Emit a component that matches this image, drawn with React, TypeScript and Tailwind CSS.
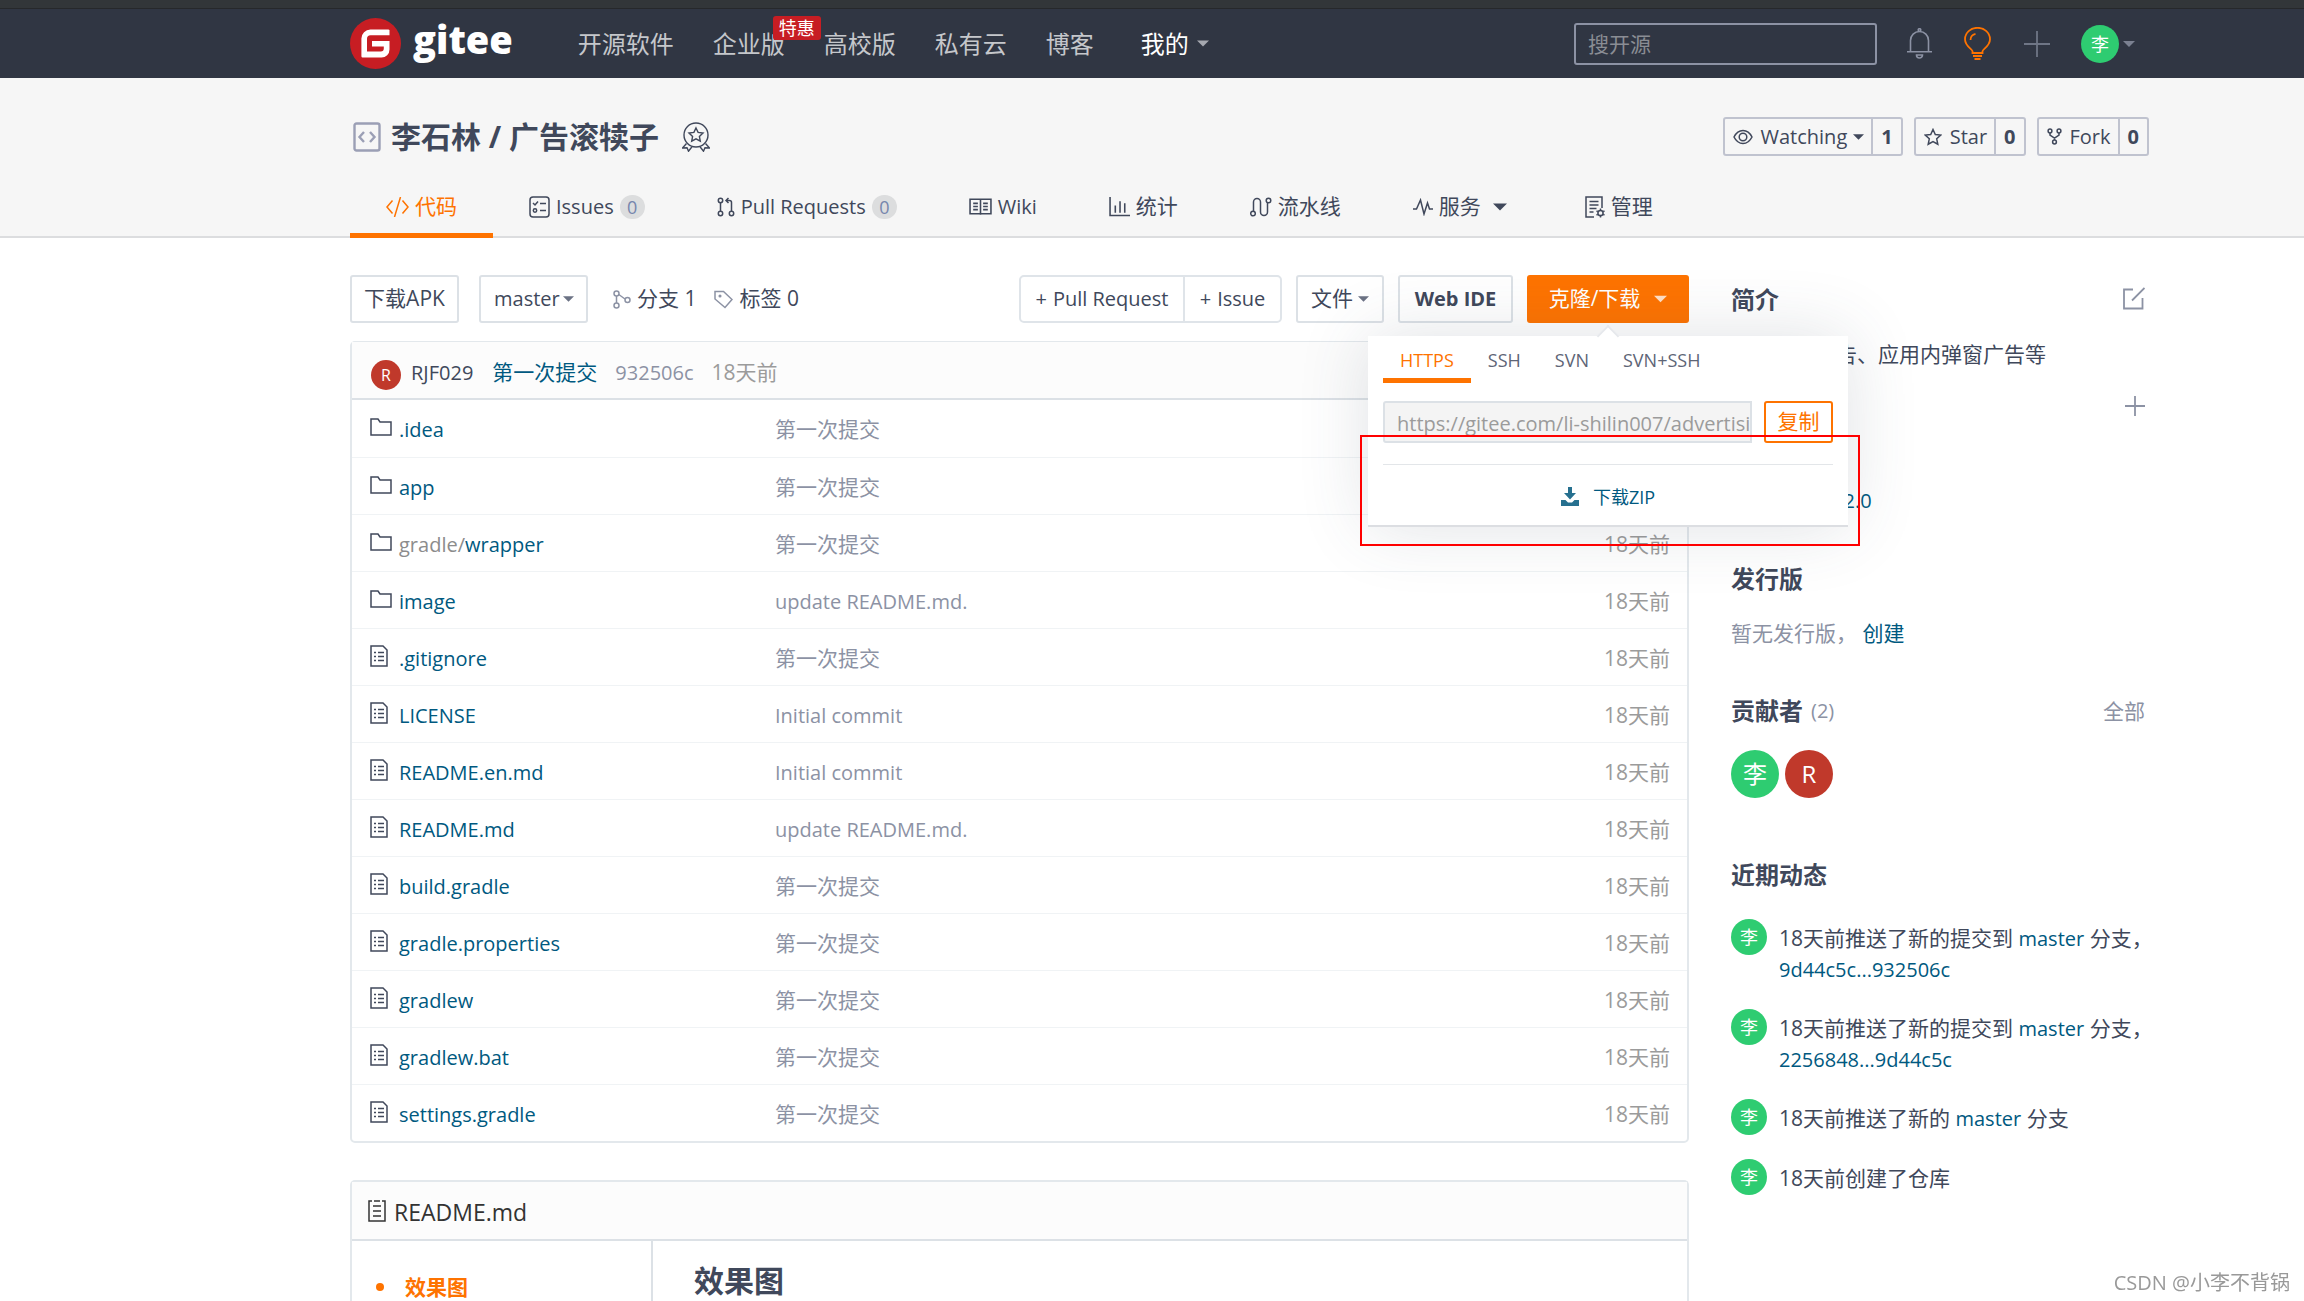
import React from 'react';

interface FileRow {
  name: string;
  prefix?: string;
  message: string;
  folder?: boolean;
}

const files: FileRow[] = [
  { name: '.idea', message: '第一次提交', folder: true },
  { name: 'app', message: '第一次提交', folder: true },
  { name: 'wrapper', prefix: 'gradle/', message: '第一次提交', folder: true },
  { name: 'image', message: 'update README.md.', folder: true },
  { name: '.gitignore', message: '第一次提交' },
  { name: 'LICENSE', message: 'Initial commit' },
  { name: 'README.en.md', message: 'Initial commit' },
  { name: 'README.md', message: 'update README.md.' },
  { name: 'build.gradle', message: '第一次提交' },
  { name: 'gradle.properties', message: '第一次提交' },
  { name: 'gradlew', message: '第一次提交' },
  { name: 'gradlew.bat', message: '第一次提交' },
  { name: 'settings.gradle', message: '第一次提交' },
];

interface IconProps {
  className: string;
  viewBox: string;
  width?: number;
  children: React.ReactNode;
}

const Icon: React.FC<IconProps> = ({ className, viewBox, width = 1.5, children }) => (
  <svg className={`shrink-0 ${className}`} viewBox={viewBox} fill="none" stroke="currentColor" strokeWidth={width} aria-hidden="true">
    {children}
  </svg>
);

const Caret = ({ className = 'w-3 h-[6px]' }: { className?: string }) => (
  <svg className={`shrink-0 ${className}`} viewBox="0 0 12 6" fill="currentColor" aria-hidden="true">
    <path d="M0 0h12L6 6z" />
  </svg>
);

const FolderIcon = () => (
  <Icon className="w-[22px] h-[18px]" viewBox="0 0 22 18">
    <path d="M1 17V1h7l2 3h11v13z" />
  </Icon>
);

const FileIcon = () => (
  <Icon className="w-[18px] h-[22px] mr-1" viewBox="0 0 18 22">
    <path d="M1 1h12l4 4v16H1z" />
    <path d="M4 7.5h2M8 7.5h6M4 11.5h2M8 11.5h6M4 15.5h2M8 15.5h6" />
  </Icon>
);

const GiteeMark = () => (
  <svg className="w-[51px] h-[51px] shrink-0" viewBox="0 0 51 51" aria-hidden="true">
    <circle cx="25.5" cy="25.5" r="25.5" fill="#c71d23" />
    <path
      d="M39.5 12v5.2H20.5a3.5 3.5 0 0 0-3.5 3.5v12.8h13.8a3 3 0 0 0 3-3v-2h-11.8v-5.5h17.5v8.500a8 8 0 0 1-8 8H12.600a1.200 1.200 0 0 1-1.200-1.200V20.500a9 9 0 0 1 9-9h18z"
      fill="#fff"
    />
  </svg>
);

const Avatar = ({ text, className }: { text: string; className: string }) => (
  <span className={`rounded-full shrink-0 flex items-center justify-center text-white ${className}`}>{text}</span>
);

const navLinks = ['企业版', '高校版', '私有云', '博客'];

const TopBar = () => (
  <header className="bg-[#303643] border-t-8 border-[#323639]">
    <div className="h-[70px] border-t border-[#26282b] flex items-center pl-[350px] pr-[169px] text-2xl text-[#c5c7cb]">
      <a href="#" className="flex items-center gap-3 text-white">
        <GiteeMark />
        <span className="text-[38px] leading-[48px] font-extrabold pb-[10px]">gitee</span>
      </a>
      <nav className="flex items-center gap-[39px] ml-[65px] whitespace-nowrap">
        <a href="#">开源软件</a>
        {navLinks.map((label) => (
          <a href="#" key={label} className="relative">
            {label}
            {label === '企业版' && (
              <span className="absolute -top-3 -right-9 h-6 px-[6px] rounded-[3px] bg-[#c71d23] text-white text-lg leading-6">特惠</span>
            )}
          </a>
        ))}
        <a href="#" className="flex items-center gap-2 ml-2 text-white">
          我的
          <Caret className="w-3 h-[7px] text-[#a5a8b0]" />
        </a>
      </nav>
      <div className="ml-auto flex items-center">
        <input
          aria-label="搜开源"
          placeholder="搜开源"
          className="w-[303px] h-[42px] rounded-[3px] border-2 border-[#8c92a4] bg-transparent px-3 text-[21px] placeholder:text-[#8a8d94]"
        />
        <button aria-label="通知" className="ml-[30px] text-[#8c92a4]">
          <Icon className="w-[25px] h-[31px]" viewBox="0 0 25 31" width={1.6}>
            <path d="M3.5 23.5V12.5a9 9 0 0 1 18 0v11M0 23.7h25M9.5 27h6a3 3 0 0 1-6 0z" />
            <circle cx="12.5" cy="2" r="1.3" />
          </Icon>
        </button>
        <button aria-label="动态" className="ml-8 text-[#fe7300]">
          <Icon className="w-[27px] h-[33px]" viewBox="0 0 27 33" width={1.8}>
            <path d="M8.5 26v-1.8c0-2-7.5-5-7.5-12a12.5 11.4 0 0 1 25 0c0 7-7.5 10-7.5 12V26zM9 29h9M10.5 32h6M6.5 13c0-3 2-5.5 5-6.2" />
          </Icon>
        </button>
        <button aria-label="新建" className="ml-[33px] text-[#6f7686]">
          <Icon className="w-[26px] h-[26px]" viewBox="0 0 26 26" width={1.8}>
            <path d="M13 0v26M0 13h26" />
          </Icon>
        </button>
        <button aria-label="用户菜单" className="ml-[31px] flex items-center gap-1 text-[#7b8191]">
          <Avatar text="李" className="w-[38px] h-[38px] bg-[#2ecc71] text-lg" />
          <Caret />
        </button>
      </div>
    </div>
  </header>
);

const CountButton = ({ label, count, caret, icon }: { label: string; count: number; caret?: boolean; icon: React.ReactNode }) => (
  <div className="flex h-[39px] rounded-[3px] border-2 border-[#c0c3cf] text-xl">
    <button className="flex items-center gap-2 pl-2 pr-[7px]">
      {icon}
      {label}
      {caret && <Caret className="w-[11px] h-[6px] -ml-[2px]" />}
    </button>
    <a href="#" className="flex items-center px-2 border-l-2 border-[#c0c3cf] font-bold">{count}</a>
  </div>
);

interface Tab {
  label: string;
  latin?: boolean;
  count?: number;
  active?: boolean;
  caret?: boolean;
  icon: React.ReactNode;
}

const tabs: Tab[] = [
  {
    label: '代码',
    active: true,
    icon: (
      <Icon className="w-[23px] h-5" viewBox="0 0 23 20">
        <path d="M6.5 3.5L1 10l5.5 6.5M16.5 3.5L22 10l-5.5 6.5M14.5 0l-6 20" />
      </Icon>
    ),
  },
  {
    label: 'Issues',
    latin: true,
    count: 0,
    icon: (
      <Icon className="w-[21px] h-[22px]" viewBox="0 0 21 22">
        <rect x="1" y="1" width="19" height="20" rx="3" />
        <path d="M4 7l2 2 3-3.5M11 7.5h6M11 14.5h6" />
        <circle cx="6" cy="14.5" r="1.7" />
      </Icon>
    ),
  },
  {
    label: 'Pull Requests',
    latin: true,
    count: 0,
    icon: (
      <Icon className="w-[18px] h-5" viewBox="0 0 18 20">
        <circle cx="3.5" cy="3.5" r="2.2" />
        <circle cx="3.5" cy="16.5" r="2.2" />
        <circle cx="14.5" cy="16.5" r="2.2" />
        <path d="M3.5 6v8.2M14.5 14V5.5a2 2 0 0 0-2-2H9M11.5 1L9 3.5 11.5 6" />
      </Icon>
    ),
  },
  {
    label: 'Wiki',
    latin: true,
    icon: (
      <Icon className="w-[23px] h-[18px]" viewBox="0 0 22 17">
        <path d="M1 1h20v14H1zM11 1v15M4 5h4.5M4 8h4.5M4 11h4.5M13.5 5H18M13.5 8H18M13.5 11H18" />
      </Icon>
    ),
  },
  {
    label: '统计',
    icon: (
      <Icon className="w-[21px] h-[21px]" viewBox="0 0 20 20">
        <path d="M1 1v17.5h19M6 16V9M10.5 16V5M15 16V7" />
      </Icon>
    ),
  },
  {
    label: '流水线',
    icon: (
      <Icon className="w-[22px] h-5" viewBox="0 0 22 20">
        <circle cx="3" cy="16.5" r="2.3" />
        <circle cx="18.5" cy="3.5" r="2.3" />
        <path d="M3.5 14V5a3.5 3.5 0 0 1 7 0v10a3.5 3.5 0 0 0 7 0V6" />
      </Icon>
    ),
  },
  {
    label: '服务',
    caret: true,
    icon: (
      <Icon className="w-5 h-[18px]" viewBox="0 0 20 18">
        <path d="M0 11h3.5L7.5 2l3.5 14 3.5-11 2 6H20" />
      </Icon>
    ),
  },
  {
    label: '管理',
    icon: (
      <Icon className="w-5 h-[22px]" viewBox="0 0 20 22">
        <path d="M9 21H1V1h16v11M4.5 5.5h9M4.5 9h9M4.5 12.5h7M4.5 16h4" />
        <circle cx="15.5" cy="17" r="2.6" />
        <path d="M15.5 12.5v1.5M15.5 20v1.5M11.5 14.8l1.3.8M18.2 18.4l1.3.8M19.5 14.8l-1.3.8M12.8 18.4l-1.3.8" />
      </Icon>
    ),
  },
];

const RepoHeader = () => (
  <section className="bg-[#f6f6f6] border-b-2 border-[#dcdddf] pl-[350px] pr-[155px] pt-[39px]">
    <div className="flex items-center h-[39px]">
      <Icon className="w-7 h-[30px] text-[#9b9fb5] ml-[3px]" viewBox="0 0 28 30" width={2.4}>
        <rect x="1.5" y="1.5" width="25" height="27" rx="2" />
        <path d="M11 10l-4.5 5L11 20M17 10l4.5 5L17 20" />
      </Icon>
      <h1 className="text-[30px] font-bold ml-[10px]">
        <a href="#">李石林</a> / <a href="#">广告滚犊子</a>
      </h1>
      <Icon className="w-7 h-[30px] ml-[23px]" viewBox="0 0 28 30" width={1.4}>
        <circle cx="14" cy="13" r="12" />
        <path d="M14 6l2.1 4.4 4.9.6-3.6 3.4.9 4.8-4.3-2.4-4.3 2.4.9-4.8L7 11l4.9-.6z" />
        <path d="M4.500 21.500l-4 4.500 4.500-.3 1.500 3.500 3.500-4.500M23.500 21.500l4 4.500-4.500-.3-1.500 3.500-3.500-4.500" />
      </Icon>
      <div className="ml-auto flex gap-[11px]">
        <CountButton
          label="Watching"
          count={1}
          caret
          icon={
            <Icon className="w-5 h-4" viewBox="0 0 20 16">
              <path d="M1 8c2-4 5-6.5 9-6.5S17 4 19 8c-2 4-5 6.5-9 6.5S3 12 1 8z" />
              <circle cx="10" cy="8" r="3.8" />
            </Icon>
          }
        />
        <CountButton
          label="Star"
          count={0}
          icon={
            <Icon className="w-[18px] h-[18px]" viewBox="0 0 18 18">
              <path d="M9 1.5l2.3 5 5.4.6-4 3.7 1.1 5.4L9 13.5l-4.8 2.7 1.1-5.4-4-3.7 5.4-.6z" />
            </Icon>
          }
        />
        <CountButton
          label="Fork"
          count={0}
          icon={
            <Icon className="w-[15px] h-[17px]" viewBox="0 0 15 17">
              <circle cx="3" cy="3" r="1.9" />
              <circle cx="12" cy="3" r="1.9" />
              <circle cx="7.5" cy="14" r="1.9" />
              <path d="M3 5v2l4.5 3L12 7V5M7.5 10v2" />
            </Icon>
          }
        />
      </div>
    </div>
    <nav className="flex h-[82px] -mb-[2px] pt-6 whitespace-nowrap">
      {tabs.map((tab) => (
        <a
          href="#"
          key={tab.label}
          className={`flex items-center gap-[6px] px-9 border-b-[5px] ${tab.active ? 'text-[#fe7300] border-[#fe7300]' : 'border-transparent'}`}
        >
          {tab.icon}
          <span className={tab.latin ? 'text-xl' : 'text-[21px]'}>{tab.label}</span>
          {tab.caret && <Caret className="w-[14px] h-2 mx-[6px]" />}
          {tab.count !== undefined && (
            <span className="w-[25px] h-6 rounded-full bg-[#dcddde] text-[#7686ad] text-lg leading-6 text-center">{tab.count}</span>
          )}
        </a>
      ))}
    </nav>
  </section>
);

const protocols = ['HTTPS', 'SSH', 'SVN', 'SVN+SSH'];

const ClonePopover = () => (
  <div className="absolute z-10 top-[61px] right-[-159px] w-[480px] h-[191px] bg-white border-b-2 border-[#dcdee2] px-[15px] shadow-[0_0_70px_rgba(64,72,91,0.16)]">
    <span className="absolute -top-2 left-[232px] w-4 h-4 rotate-45 bg-white border-t-2 border-l-2 border-[#e6e8ec]" />
    <div role="tablist" className="relative flex h-[47px] text-lg leading-6 text-[#5e6576]">
      {protocols.map((name, i) => (
        <button
          role="tab"
          aria-selected={i === 0}
          key={name}
          className={`px-[17px] pt-[6px] border-b-[5px] ${i === 0 ? 'text-[#fe7300] border-[#fe7300]' : 'border-transparent'}`}
        >
          {name}
        </button>
      ))}
    </div>
    <div className="flex gap-3 mt-[18px] h-[42px]">
      <input
        aria-label="仓库地址"
        readOnly
        value="https://gitee.com/li-shilin007/advertising.git"
        className="flex-1 min-w-0 rounded-l-[3px] border-2 border-[#dce1e6] bg-[#f4f4f4] pl-3 pt-1 text-xl text-[#9b9b9b]"
      />
      <button className="w-[69px] rounded-[3px] border-2 border-[#fe7300] text-[#fe7300] text-[21px]">复制</button>
    </div>
    <a href="#" className="mt-[21px] border-t border-[#e3e6e9] h-[64px] flex items-center justify-center gap-[14px] text-lg text-[#005980]">
      <svg className="w-[18px] h-[19px]" viewBox="0 0 18 19" fill="#26708f" aria-hidden="true">
        <path d="M7 0h4v6h4l-6 6.5L3 6h4zM0 13h4.5l2.5 2.5h4L13.5 13H18v6H0z" />
      </svg>
      下载ZIP
    </a>
    {/* highlight frame round the zip link */}
    <span className="absolute top-[99px] -left-2 w-[500px] h-[111px] border-2 border-[#ff0000] pointer-events-none" />
  </div>
);

const boxButton = 'h-12 flex items-center justify-center border-2 border-[#dce1e6] rounded-[3px]';

const Toolbar = () => (
  <div className="relative flex items-center whitespace-nowrap">
    <button className={`${boxButton} w-[109px] text-[21px]`}>下载APK</button>
    <label className="relative ml-5">
      <select aria-label="分支" className={`${boxButton} w-[109px] pl-[13px] appearance-none bg-white text-xl`}>
        <option>master</option>
      </select>
      <Caret className="absolute right-[14px] top-[21px] w-[11px] h-[6px] text-[#6b7284]" />
    </label>
    <a href="#" className="flex items-center gap-[6px] ml-[25px] text-[21px]">
      <Icon className="w-[18px] h-[19px] text-[#8c92a4]" viewBox="0 0 18 19">
        <circle cx="3.5" cy="3.5" r="2.5" />
        <circle cx="3.5" cy="15.5" r="2.5" />
        <circle cx="14.5" cy="10" r="2.5" />
        <path d="M3.5 6v7M5.8 4.5L12 9" />
      </Icon>
      分支 1
    </a>
    <a href="#" className="flex items-center gap-[6px] ml-[18px] text-[21px]">
      <Icon className="w-[19px] h-[19px] text-[#8c92a4]" viewBox="0 0 19 19">
        <path d="M1 1.5h8.5l8.5 8-7 8-10-8.5z" />
        <circle cx="6" cy="6" r=".8" />
      </Icon>
      标签 0
    </a>
    <div className="ml-auto flex gap-[14px]">
      <div className="flex h-12 border-2 border-[#dfe4e9] rounded-[5px] text-xl">
        <button className="w-[162px] flex items-center justify-center gap-[6px]"><span>+</span> Pull Request</button>
        <button className="w-[97px] flex items-center justify-center gap-[6px] border-l-2 border-[#dfe4e9]"><span>+</span> Issue</button>
      </div>
      <button className={`${boxButton} w-[88px] gap-[5px] text-[21px]`}>
        文件
        <Caret className="w-[11px] h-[6px] text-[#6b7284]" />
      </button>
      <button className={`${boxButton} w-[115px] text-xl font-bold`}>Web IDE</button>
      <button className="h-12 w-[162px] flex items-center justify-center gap-[14px] rounded-[3px] bg-[#fe7300] text-white text-[21px]">
        克隆/下载
        <Caret className="w-[13px] h-2 text-[#ffe0c6]" />
      </button>
    </div>
    <ClonePopover />
  </div>
);

const FileTable = () => (
  <div className="mt-[18px] border-2 border-t border-[#e3e8ec] rounded-[5px]">
    <div className="h-[58px] flex items-center pl-[19px] pt-[5px] bg-[#fcfcfc] border-b-2 border-[#dce1e6] text-[21px]">
      <Avatar text="R" className="w-[30px] h-[30px] bg-[#c0392b] text-base mt-1" />
      <a href="#" className="ml-[10px] text-xl">RJF029</a>
      <a href="#" className="ml-[19px] text-[#005980]">第一次提交</a>
      <a href="#" className="ml-[18px] text-xl text-[#8c92a4]">932506c</a>
      <span className="ml-[18px] text-[#9b9b9b]">18天前</span>
    </div>
    <table className="w-full table-fixed text-[21px] leading-7">
      <tbody>
        {files.map((file) => (
          <tr key={file.name} className="h-[57px] border-b border-[#f0f3f5] last:border-b-0">
            <td className="w-[423px] pl-[18px] pt-1">
              <a href="#" className="flex items-center text-xl leading-7 text-[#005980]">
                <span className="text-[#40485b] mr-[7px] pb-[6px]">{file.folder ? <FolderIcon /> : <FileIcon />}</span>
                {file.prefix && <span className="text-[#8c8c8c]">{file.prefix}</span>}
                {file.name}
              </a>
            </td>
            <td className={file.message.includes('第') ? 'pt-[2px] text-[#8c92a4]' : 'pt-1 text-xl text-[#8c92a4]'}>{file.message}</td>
            <td className="w-[140px] pr-[17px] pt-[2px] text-right text-[#9b9b9b]">18天前</td>
          </tr>
        ))}
      </tbody>
    </table>
  </div>
);

const Readme = () => (
  <div className="mt-[37px] flex-1 flex flex-col border-2 border-b-0 border-[#e3e8ec] rounded-t-[5px]">
    <div className="h-[59px] flex items-center gap-2 pl-4 pt-1 bg-[#fcfcfc] border-b-2 border-[#dce1e6] text-[23px] text-[#333]">
      <Icon className="w-[18px] h-[22px] mb-1" viewBox="0 0 18 22">
        <path d="M4 1H1v20h16V1h-3M6 1h6M5 6h8M5 11h8M5 16h8" />
      </Icon>
      README.md
    </div>
    <div className="flex-1 flex">
      <ul className="w-[301px] border-r-2 border-[#dce1e6] pt-8 pl-[53px] text-[21px] leading-7 font-bold text-[#fe7300]">
        <li className="relative before:absolute before:-left-[29px] before:top-[10px] before:w-2 before:h-2 before:rounded-full before:bg-[#fe7300]">
          <a href="#">效果图</a>
        </li>
      </ul>
      <h2 className="pl-[41px] pt-5 text-[30px] leading-10 font-bold">效果图</h2>
    </div>
  </div>
);

const Feed = ({ children }: { children: React.ReactNode }) => (
  <li className="flex gap-3">
    <Avatar text="李" className="w-9 h-9 bg-[#2ecc71] text-lg" />
    <p className="pt-1 leading-[30px] whitespace-nowrap">{children}</p>
  </li>
);

const Blue = ({ children }: { children: React.ReactNode }) => (
  <a href="#" className="text-xl leading-[30px] text-[#005980]">{children}</a>
);

const Sidebar = () => (
  <aside className="w-[418px] shrink-0 text-[21px] leading-[30px]">
    <div className="flex items-center justify-between pt-[10px] pr-1">
      <h3 className="text-2xl leading-[30px] font-bold">简介</h3>
      <button aria-label="编辑" className="pb-1 text-[#8c92a4]">
        <Icon className="w-[22px] h-[23px]" viewBox="0 0 22 23" width={1.8}>
          <path d="M10 2.5H1v19h18.5V11M21.5 1L9 13.5" />
        </Icon>
      </button>
    </div>
    <p className="mt-6">集成开屏广告、应用内弹窗广告等</p>
    <div className="flex justify-end mt-[27px] pr-1 h-5">
      <button aria-label="添加标签" className="text-[#8c92a4]">
        <Icon className="w-5 h-5" viewBox="0 0 20 20" width={1.8}>
          <path d="M10 0v20M0 10h20" />
        </Icon>
      </button>
    </div>
    <p className="mt-[69px] pl-[37px]">
      <Blue>Apache-2.0</Blue>
    </p>

    <h3 className="mt-12 text-2xl leading-[30px] font-bold">发行版</h3>
    <p className="mt-6 text-[#8c92a4]">
      暂无发行版， <a href="#" className="text-[#005980]">创建</a>
    </p>

    <div className="mt-12 flex items-center pr-1">
      <h3 className="text-2xl leading-[30px] font-bold">贡献者</h3>
      <span className="ml-2 text-xl text-[#8c92a4]">(2)</span>
      <a href="#" className="ml-auto text-[#8c92a4]">全部</a>
    </div>
    <div className="mt-6 flex gap-[6px]">
      <Avatar text="李" className="w-12 h-12 bg-[#2ecc71] text-2xl" />
      <Avatar text="R" className="w-12 h-12 bg-[#c0392b] text-2xl" />
    </div>

    <h3 className="mt-[62px] text-2xl leading-[30px] font-bold">近期动态</h3>
    <ul className="mt-[29px] flex flex-col gap-6">
      <Feed>
        18天前推送了新的提交到 <Blue>master</Blue> 分支，<br />
        <Blue>9d44c5c...932506c</Blue>
      </Feed>
      <Feed>
        18天前推送了新的提交到 <Blue>master</Blue> 分支，<br />
        <Blue>2256848...9d44c5c</Blue>
      </Feed>
      <Feed>
        18天前推送了新的 <Blue>master</Blue> 分支
      </Feed>
      <Feed>18天前创建了仓库</Feed>
    </ul>
  </aside>
);

const App = () => (
  <div lang="zh-CN" className="min-h-screen flex flex-col bg-white text-[#40485b] font-['Open_Sans','Noto_Sans_CJK_SC',sans-serif]">
    <TopBar />
    <RepoHeader />
    <main className="flex-1 flex gap-[42px] pl-[350px] pr-[155px] pt-[37px]">
      <div className="flex-1 min-w-0 flex flex-col">
        <Toolbar />
        <FileTable />
        <Readme />
      </div>
      <Sidebar />
    </main>
    <p className="fixed bottom-1 right-[14px] text-xl leading-7 text-[#999]">CSDN @小李不背锅</p>
  </div>
);

export default App;
